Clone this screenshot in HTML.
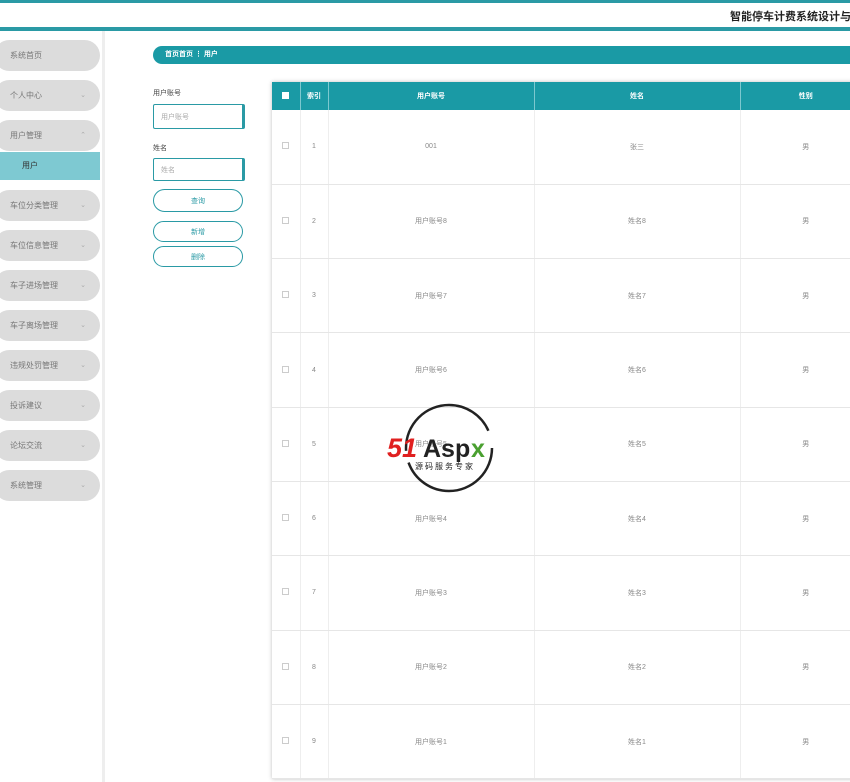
<!DOCTYPE html>
<html><head><meta charset="utf-8"><style>
*{margin:0;padding:0;box-sizing:border-box}
body{width:850px;height:782px;overflow:hidden;background:#fff;font-family:"Liberation Sans","Noto Sans CJK SC",sans-serif;position:relative;font-size:8px;color:#555}
.a{position:absolute}
.menu{position:absolute;left:-6px;width:106px;height:31px;border-radius:16px;background:#dcdcdc;color:#777;font-size:8px;line-height:31px;padding-left:16px}
.menu i{position:absolute;right:14px;top:0;font-style:normal;color:#aaa;font-size:7px}
.btn{position:absolute;left:153px;width:90px;border:1.5px solid #2a9aa5;border-radius:12px;color:#2a9aa5;font-size:7px;display:flex;align-items:center;justify-content:center}
.inp{position:absolute;left:153px;width:92px;border:1.5px solid #2a9aa5;border-right:3px solid #2a9aa5;border-radius:2px;color:#aaa;padding-left:7px;font-size:7px;display:flex;align-items:center}
table{position:absolute;left:272px;top:82px;width:600px;border-collapse:collapse;box-shadow:0 0 4px rgba(0,0,0,.25)}
th{background:#1a9aa5;color:#fff;height:28px;font-size:7px;border-right:1px solid #7cc8cf}
td{height:74.3px;text-align:center;color:#888;font-size:7px;border-bottom:1px solid #e6e6e6;border-right:1px solid #eee;vertical-align:middle}
.cb{display:inline-block;width:7px;height:7px;border:1px solid #ccc}
</style></head><body>
<div class="a" style="left:0;top:0;width:850px;height:3px;background:#2a9aa5"></div>
<div class="a" style="top:8px;font-size:11px;font-weight:bold;color:#222;white-space:nowrap;left:730px">智能停车计费系统设计与</div>
<div class="a" style="left:0;top:27px;width:850px;height:4px;background:#2a9aa5"></div>
<div class="a" style="left:102px;top:31px;width:3px;height:751px;background:#eee"></div>

<div class="menu" style="top:40px">系统首页</div>
<div class="menu" style="top:80px">个人中心<i>⌄</i></div>
<div class="menu" style="top:120px">用户管理<i>⌃</i></div>
<div class="a" style="left:0;top:152px;width:100px;height:28px;background:#7ec9d2;color:#333;font-size:8px;line-height:28px;padding-left:22px">用户</div>
<div class="menu" style="top:190px">车位分类管理<i>⌄</i></div>
<div class="menu" style="top:230px">车位信息管理<i>⌄</i></div>
<div class="menu" style="top:270px">车子进场管理<i>⌄</i></div>
<div class="menu" style="top:310px">车子离场管理<i>⌄</i></div>
<div class="menu" style="top:350px">违规处罚管理<i>⌄</i></div>
<div class="menu" style="top:390px">投诉建议<i>⌄</i></div>
<div class="menu" style="top:430px">论坛交流<i>⌄</i></div>
<div class="menu" style="top:470px">系统管理<i>⌄</i></div>

<div class="a" style="left:153px;top:46px;width:700px;height:18px;background:#1a9aa5;border-radius:9px 0 0 9px;color:#fff;font-size:7px;line-height:18px;padding-left:12px;font-weight:bold">首页首页 ⋮ 用户</div>

<div class="a" style="left:153px;top:88px;font-size:7px;color:#444">用户账号</div>
<div class="inp" style="top:104px;height:25px">用户账号</div>
<div class="a" style="left:153px;top:143px;font-size:7px;color:#444">姓名</div>
<div class="inp" style="top:158px;height:23px">姓名</div>
<div class="btn" style="top:189px;height:23px">查询</div>
<div class="btn" style="top:221px;height:21px">新增</div>
<div class="btn" style="top:246px;height:21px">删除</div>

<table>
<tr><th style="width:28px"><span class="cb" style="background:#fff;border:none"></span></th><th style="width:28px">索引</th><th style="width:206px">用户账号</th><th style="width:206px">姓名</th><th>性别</th></tr>
<tr><td><span class="cb"></span></td><td>1</td><td>001</td><td>张三</td><td>男</td></tr>
<tr><td><span class="cb"></span></td><td>2</td><td>用户账号8</td><td>姓名8</td><td>男</td></tr>
<tr><td><span class="cb"></span></td><td>3</td><td>用户账号7</td><td>姓名7</td><td>男</td></tr>
<tr><td><span class="cb"></span></td><td>4</td><td>用户账号6</td><td>姓名6</td><td>男</td></tr>
<tr><td><span class="cb"></span></td><td>5</td><td>用户账号5</td><td>姓名5</td><td>男</td></tr>
<tr><td><span class="cb"></span></td><td>6</td><td>用户账号4</td><td>姓名4</td><td>男</td></tr>
<tr><td><span class="cb"></span></td><td>7</td><td>用户账号3</td><td>姓名3</td><td>男</td></tr>
<tr><td><span class="cb"></span></td><td>8</td><td>用户账号2</td><td>姓名2</td><td>男</td></tr>
<tr><td><span class="cb"></span></td><td>9</td><td>用户账号1</td><td>姓名1</td><td>男</td></tr>
</table>

<svg class="a" style="left:385px;top:402px" width="130" height="94" viewBox="0 0 130 94">
<circle cx="64" cy="46" r="43" fill="none" stroke="#222" stroke-width="2.5" stroke-dasharray="120 12 120 18"/>
<text x="2" y="55" font-family="Liberation Sans" font-weight="bold" font-style="italic" font-size="27" fill="#e02020">51</text>
<text x="38" y="55" font-family="Liberation Sans" font-weight="bold" font-size="25" fill="#222">Asp</text>
<text x="86" y="55" font-family="Liberation Sans" font-weight="bold" font-size="25" fill="#4aa030">x</text>
<text x="30" y="67" font-family="Noto Sans CJK SC" font-size="8" fill="#222" letter-spacing="2">源码服务专家</text>
</svg>
</body></html>
